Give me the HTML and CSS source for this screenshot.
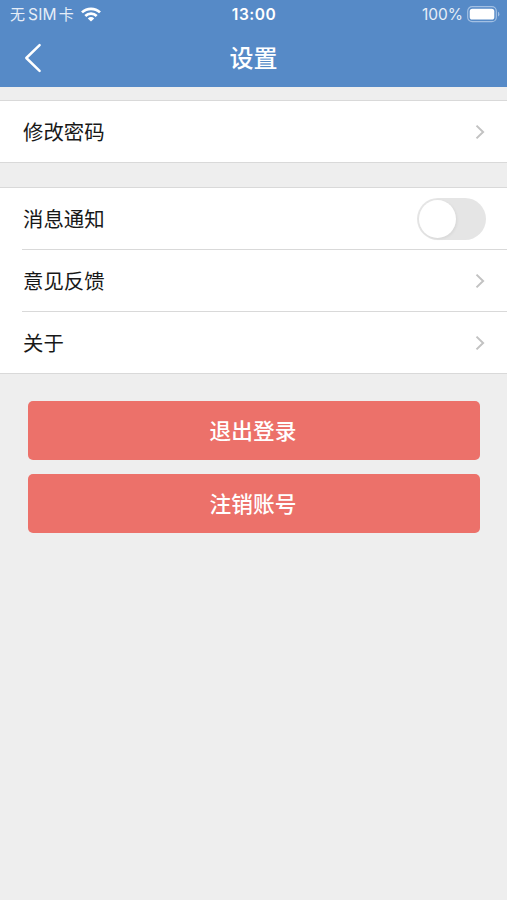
FILE: index.html
```html
<!DOCTYPE html>
<html lang="zh-CN">
<head>
<meta charset="utf-8">
<title>设置</title>
<link rel="stylesheet" href="styles.css">
</head>
<body>
<header class="header">
  <div class="status">
    <div class="carrier"><span>无</span><span class="sim">SIM</span><span>卡</span>
      <svg class="wifi" width="20" height="15" viewBox="0 0 20 15" fill="none" stroke="#fff" stroke-width="2.7"><path d="M1 5.4a13 13 0 0 1 18 0"/><path d="M4.3 9a8.2 8.2 0 0 1 11.4 0"/><path d="M10 14.6l-3.2-3.2a4.6 4.6 0 0 1 6.4 0z" fill="#fff" stroke="none"/></svg>
    </div>
    <div class="time">13:00</div>
    <div class="power"><span>100%</span>
      <svg class="battery" width="33" height="17" viewBox="0 0 33 17"><rect x=".7" y=".7" width="28.6" height="15" rx="4.5" fill="none" stroke="#a3c0e3" stroke-width="1.2"/><rect x="2.7" y="2.8" width="24.6" height="10.8" rx="2.6" fill="#fff"/><path d="M31 5.8q1.4.5 1.4 2.4T31 10.600z" fill="#a3c0e3"/></svg>
    </div>
  </div>
  <div class="navbar">
    <svg class="back" width="18" height="30" viewBox="0 0 18 30" fill="none" stroke="#fff" stroke-width="2.5" stroke-linecap="round" stroke-linejoin="round"><path d="M15.600 2.200L2.300 15l13.300 12.800"/></svg>
    <h1 class="title">设置</h1>
  </div>
</header>
<main>
  <section class="group">
    <div class="row"><span class="label">修改密码</span><svg class="chevron" viewBox="0 0 10 16"><path d="M1.500 1.600L8.100 8l-6.600 6.400"/></svg></div>
  </section>
  <section class="group">
    <div class="row"><span class="label">消息通知</span><div class="switch"><div class="knob"></div></div></div>
    <div class="row"><span class="label">意见反馈</span><svg class="chevron" viewBox="0 0 10 16"><path d="M1.500 1.600L8.100 8l-6.600 6.400"/></svg></div>
    <div class="row"><span class="label">关于</span><svg class="chevron" viewBox="0 0 10 16"><path d="M1.500 1.600L8.100 8l-6.600 6.400"/></svg></div>
  </section>
  <div class="actions">
    <button class="button">退出登录</button>
    <button class="button">注销账号</button>
  </div>
</main>
</body>
</html>
```
FILE: styles.css
```css
* { box-sizing: border-box; }
body {
  margin: 0;
  min-height: 900px;
  background: #eee;
  color: #181818;
  font-family: Inter, "Noto Sans CJK SC", sans-serif;
}
.header {
  height: 87px;
  background: #568ac7;
  color: #fff;
}
.status {
  display: grid;
  grid-template-columns: 1fr auto 1fr;
  align-items: center;
  height: 29px;
  padding: 1px 7px 0 10px;
  font-size: 15.5px;
  line-height: 28px;
  color: #e6eef8;
}
.carrier, .power { display: flex; align-items: center; }
.carrier { font-size: 15px; }
.sim { margin: 0 2px 0 3px; font-size: 15.5px; letter-spacing: .2px; }
.wifi { margin: 0 0 1px 7px; }
.battery { margin-bottom: 1px; }
.time { margin-right: 2px; font-size: 15.5px; font-weight: 600; letter-spacing: .5px; color: #fff; }
.power { justify-content: flex-end; gap: 4px; }
.navbar {
  display: grid;
  grid-template-columns: 1fr auto 1fr;
  align-items: center;
  height: 58px;
  padding-left: 24px;
}
.back { display: block; }
.title {
  grid-column: 2;
  margin: 0 24px 0 0;
  padding-top: 2px;
  font-size: 24px;
  font-weight: 500;
  line-height: 56px;
}
.group {
  margin-top: 13px;
  border: solid #d9d9d9;
  border-width: 1px 0;
  background: #fff;
}
.group + .group { margin-top: 24px; }
.row {
  display: flex;
  align-items: center;
  justify-content: space-between;
  height: 61px;
  margin-left: 22px;
  padding: 0 21px 0 1px;
  font-size: 20.4px;
}
.row + .row { height: 62px; border-top: 1px solid #d9d9d9; }
.label { padding-bottom: 2px; }
.chevron {
  width: 10px;
  height: 16px;
  margin-right: 1px;
  fill: none;
  stroke: #c2c2c2;
  stroke-width: 2;
}
.switch {
  width: 69px;
  height: 42px;
  padding: 2px;
  border-radius: 21px;
  background: #e5e5e5;
}
.knob {
  width: 37px;
  height: 38px;
  border-radius: 50%;
  background: #fff;
  box-shadow: 1px 1px 3px #0001;
}
.actions {
  display: grid;
  gap: 14px;
  padding: 27px 27px 0 28px;
}
.button {
  height: 59px;
  padding: 0 2px 2px 0;
  border: 0;
  border-radius: 5px;
  background: #ec716a;
  color: #fff;
  font: 500 21.7px "Noto Sans CJK SC", sans-serif;
}
```
